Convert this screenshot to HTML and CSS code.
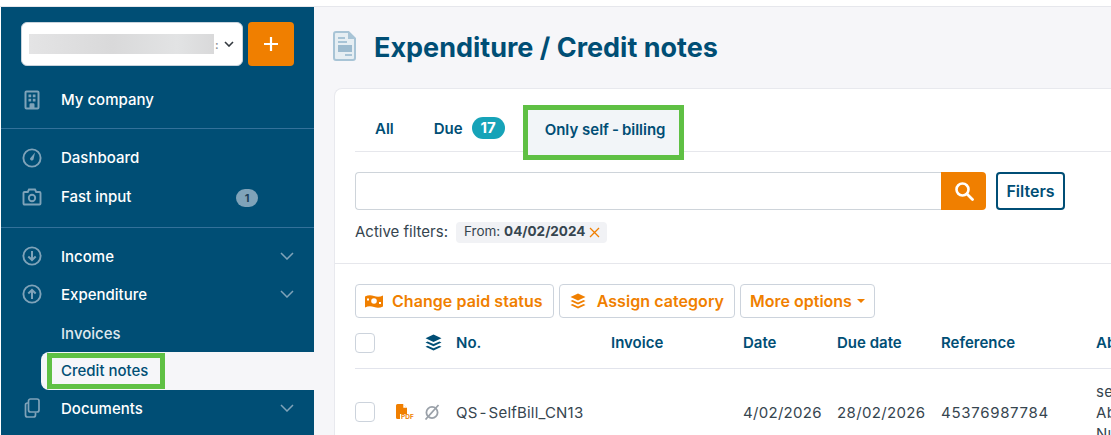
FILE: index.html
```html
<!DOCTYPE html>
<html lang="en">
<head>
	<meta charset="UTF-8">
	<title>Expenditure / Credit notes</title>
	<link rel="stylesheet" href="styles.css">
</head>
<body>
	<div class="topStrip"></div>
	<div class="app">
		<div class="sidebar">
			<div class="companyRow">
				<div class="companySelect">
					<span class="blurName"></span>
					<span class="nameEnd">:</span>
					<svg class="selectArrow" viewBox="0 0 10 6"><path d="M1 1l4 4 4-4" fill="none" stroke="#343a40" stroke-width="1.6"/></svg>
				</div>
				<div class="plusBtn">
					<svg viewBox="0 0 16 16"><path d="M8 1v14M1 8h14" stroke="#fff" stroke-width="2.2"/></svg>
				</div>
			</div>
			<div class="navGroup navFirst">
				<div class="navItem">
					<svg class="navIcon" viewBox="0 0 20 20"><path d="M4.500 1.500h11a1 1 0 0 1 1 1v15a1 1 0 0 1-1 1h-11a1 1 0 0 1-1-1v-15a1 1 0 0 1 1-1z" fill="none" stroke="#7fa3b9" stroke-width="2"/><path d="M6.500 4.500h2.700v2.700H6.500zM10.800 4.500h2.700v2.700h-2.700zM6.500 8.800h2.700v2.700H6.500zM10.800 8.800h2.700v2.700h-2.700zM7.500 18v-3.500a1.200 1.200 0 0 1 1.200-1.200h2.600a1.200 1.200 0 0 1 1.200 1.200V18z" fill="#7fa3b9"/></svg>
					<span>My company</span>
				</div>
			</div>
			<div class="navGroup">
				<div class="navItem">
					<svg class="navIcon" viewBox="0 0 20 20"><circle cx="10" cy="10" r="8.600" fill="none" stroke="#7fa3b9" stroke-width="1.900"/><path d="M13 4.600l-1.500 7a1.900 1.900 0 0 1-3.500-1.100z" fill="#7fa3b9"/></svg>
					<span>Dashboard</span>
				</div>
				<div class="navItem">
					<svg class="navIcon" viewBox="0 0 20 20"><path d="M2.500 5h3.300l1.200-2.500h6L14.200 5h3.300a1 1 0 0 1 1 1v10.500a1 1 0 0 1-1 1h-15a1 1 0 0 1-1-1V6a1 1 0 0 1 1-1z" fill="none" stroke="#7fa3b9" stroke-width="1.900"/><circle cx="10" cy="11" r="3.200" fill="none" stroke="#7fa3b9" stroke-width="1.900"/></svg>
					<span>Fast input</span>
					<span class="navCount">1</span>
				</div>
			</div>
			<div class="navGroup navLast">
				<div class="navItem">
					<svg class="navIcon" viewBox="0 0 20 20"><circle cx="10" cy="10" r="8.600" fill="none" stroke="#7fa3b9" stroke-width="1.900"/><path d="M10 5v9M6.300 10.500L10 14l3.700-3.500" fill="none" stroke="#7fa3b9" stroke-width="2"/></svg>
					<span>Income</span>
					<svg class="navArrow" viewBox="0 0 14 8"><path d="M1 1l6 6 6-6" fill="none" stroke="#7fa3b9" stroke-width="1.500"/></svg>
				</div>
				<div class="navItem">
					<svg class="navIcon" viewBox="0 0 20 20"><circle cx="10" cy="10" r="8.600" fill="none" stroke="#7fa3b9" stroke-width="1.900"/><path d="M10 15V6M6.300 9.500L10 6l3.700 3.500" fill="none" stroke="#7fa3b9" stroke-width="2"/></svg>
					<span>Expenditure</span>
					<svg class="navArrow" viewBox="0 0 14 8"><path d="M1 1l6 6 6-6" fill="none" stroke="#7fa3b9" stroke-width="1.500"/></svg>
				</div>
				<div class="navSub">Invoices</div>
				<div class="navCurrent"><span class="markBox">Credit notes</span></div>
				<div class="navItem">
					<svg class="navIcon" viewBox="0 0 20 20"><path d="M8.500 1h6.500a2 2 0 0 1 2 2v9a2 2 0 0 1-2 2H8.500a2 2 0 0 1-2-2V3a2 2 0 0 1 2-2z" fill="none" stroke="#7fa3b9" stroke-width="1.700"/><path d="M6 5h-.5a2 2 0 0 0-2 2v10a2 2 0 0 0 2 2h6a2 2 0 0 0 2-2v-2.500" fill="none" stroke="#7fa3b9" stroke-width="1.700"/></svg>
					<span>Documents</span>
					<svg class="navArrow" viewBox="0 0 14 8"><path d="M1 1l6 6 6-6" fill="none" stroke="#7fa3b9" stroke-width="1.500"/></svg>
				</div>
			</div>
		</div>
		<div class="main">
			<div class="pageTitle">
				<svg class="titleIcon" viewBox="0 0 23 30"><path d="M3 1h12.500L22 7.500V27a2 2 0 0 1-2 2H3a2 2 0 0 1-2-2V3a2 2 0 0 1 2-2z" fill="#e6eef3" stroke="#a8c4d6" stroke-width="2"/><path d="M15 1v7h7z" fill="#a8c4d6"/><path d="M5 6h7v2H5zM5 10h9v2H5zM12 23h7v2h-7z" fill="#a8c4d6"/><path d="M5 14h14v7H5z" fill="#9dbbcf"/></svg>
				<h1>Expenditure / Credit notes</h1>
			</div>
			<div class="card">
				<div class="cardTop">
					<div class="tabs">
						<div class="tab tabAll">All</div>
						<div class="tab tabDue">Due <span class="tabCount">17</span></div>
						<div class="tab tabActive"><span>Only self<i class="wideDash tabDash">-</i>billing</span></div>
					</div>
					<div class="searchRow">
						<div class="searchBox">
							<div class="searchInput"></div>
							<div class="searchBtn">
								<svg viewBox="0 0 20 20"><circle cx="8.500" cy="8.500" r="6" fill="none" stroke="#fff" stroke-width="2.600"/><path d="M13 13l5.500 5.500" stroke="#fff" stroke-width="2.800" stroke-linecap="round"/></svg>
							</div>
						</div>
						<div class="filtersBtn">Filters</div>
					</div>
					<div class="activeFilters">
						<span class="filtersLabel">Active filters:</span>
						<span class="chip"><span>From: <b>04/02/2024</b></span>
							<svg viewBox="0 0 11 11"><path d="M1 1l9 9M10 1l-9 9" stroke="#f07f00" stroke-width="1.300"/></svg>
						</span>
					</div>
				</div>
				<div class="cardBody">
					<div class="actions">
						<div class="actionBtn spaced">
							<svg class="moneyIcon" viewBox="0 0 18 14"><path d="M0 2.500c3-1.500 6-1.500 9-.5s6 1 9-.5v11c-3 1.500-6 1.500-9 .5s-6-1-9 .5z" fill="#f07f00"/><circle cx="9" cy="7" r="2.800" fill="#fff"/><path d="M2 4.500h2v2H2zM14 8h2v2h-2z" fill="#fff"/></svg>
							Change paid status
						</div>
						<div class="actionBtn spaced">
							<svg class="stackIcon" viewBox="0 0 16 16"><path d="M8 .5l7.500 3.500L8 7.500.5 4z" fill="#f07f00"/><path d="M2.500 7L.5 8 8 11.500 15.500 8l-2-1L8 9.500zM2.500 11L.5 12 8 15.500 15.500 12l-2-1L8 13.500z" fill="#f07f00"/></svg>
							Assign category
						</div>
						<div class="actionBtn moreBtn">More options<i class="caret"></i></div>
					</div>
					<div class="tableRow tableHead">
						<div><span class="check"></span></div>
						<div class="iconCell">
							<svg class="stackIcon" viewBox="0 0 16 16"><path d="M8 .5l7.500 3.500L8 7.500.5 4z" fill="#004e75"/><path d="M2.500 7L.5 8 8 11.500 15.500 8l-2-1L8 9.500zM2.500 11L.5 12 8 15.500 15.500 12l-2-1L8 13.500z" fill="#004e75"/></svg>
						</div>
						<div>No.</div>
						<div>Invoice</div>
						<div>Date</div>
						<div>Due date</div>
						<div>Reference</div>
						<div>About</div>
					</div>
					<div class="tableRow tableLine">
						<div><span class="check"></span></div>
						<div class="rowIcons">
							<span class="pdfIcon"><svg viewBox="0 0 12 15"><path d="M1.500 0h5.500l4 4v11H1.500a1.500 1.500 0 0 1-1.500-1.500v-12A1.500 1.500 0 0 1 1.500 0z" fill="#f07f00"/><path d="M7.300 0v3.700H11z" fill="#fff"/></svg><em>PDF</em></span>
							<svg class="noneIcon" viewBox="0 0 16 16"><circle cx="8" cy="8.500" r="5.600" fill="none" stroke="#9aa1a9" stroke-width="1.800"/><path d="M1.500 15.500L14.500 1" stroke="#9aa1a9" stroke-width="1.800"/></svg>
						</div>
						<div class="noCell">QS<i class="wideDash">-</i>SelfBill_CN13</div>
						<div></div>
						<div>4/02/2026</div>
						<div class="dueCell">28/02/2026</div>
						<div class="refCell">45376987784</div>
						<div class="aboutCell">self-billing<br>About<br>Number</div>
					</div>
				</div>
			</div>
		</div>
	</div>
</body>
</html>
```

FILE: styles.css
```css
*{
	margin: 0;
	padding: 0;
	box-sizing: border-box;
}
html, body{
	height: 435px;
	overflow: hidden;
	background-color: #fff;
}
body{
	font-family: "Inter", "Liberation Sans", sans-serif;
	font-size: 15px;
	line-height: 21px;
	color: #36454f;
}
.topStrip{
	height: 7px;
	border-bottom: 1px solid #e6e7ec;
}
.app{
	display: flex;
	height: 428px;
	padding-left: 1px;
}
.wideDash{
	margin: 0 2px;
	font-style: normal;
}
.tabDash{
	margin: 0 3px;
}

/* sidebar */
.sidebar{
	width: 313px;
	flex: none;
	background-color: #004e75;
	color: #fff;
	font-weight: 500;
}
.companyRow{
	display: flex;
	gap: 5px;
	padding: 15px 20px 0;
}
.companySelect{
	display: flex;
	align-items: center;
	width: 222px;
	height: 44px;
	padding: 0 7px;
	background-color: #fff;
	border: 1px solid #c9d3dc;
	border-radius: 6px;
	color: #8a8f95;
	font-size: 12px;
}
.blurName{
	width: 185px;
	height: 20px;
	background: linear-gradient(90deg, #e4e4e5, #d9d9da 45%, #e2e3e4 80%, #d9d9da);
}
.nameEnd{
	margin-left: 1px;
	width: 7px;
}
.selectArrow{
	width: 10px;
	height: 6px;
	margin-left: 2px;
}
.plusBtn{
	display: flex;
	align-items: center;
	justify-content: center;
	width: 46px;
	height: 44px;
	background-color: #f07f00;
	border-radius: 4px;
}
.plusBtn svg{
	width: 16px;
	height: 16px;
}
.navGroup{
	padding: 10px 0;
	border-bottom: 1px solid #33719a;
}
.navFirst{
	height: 63px;
	padding: 15px 0 0;
}
.navLast{
	border-bottom: none;
}
.navItem{
	display: flex;
	align-items: center;
	height: 39px;
	padding: 0 20px 2px 21px;
}
.navLast .navItem{
	height: 38px;
}
.navIcon{
	width: 20px;
	height: 20px;
	margin-right: 19px;
	flex: none;
}
.navCount{
	margin: 2px 36px 0 auto;
	width: 22px;
	height: 18px;
	border-radius: 9px;
	background-color: #7fa3b9;
	color: #1c3f57;
	font-size: 11px;
	font-weight: 700;
	line-height: 18px;
	text-align: center;
}
.navArrow{
	width: 14px;
	height: 8px;
	margin-left: auto;
}
.navSub{
	height: 38px;
	padding-left: 60px;
	line-height: 40px;
	color: #dfe8ee;
}
.navCurrent{
	display: flex;
	height: 38px;
	margin-left: 40px;
	background-color: #f6f6f9;
	border-radius: 8px 0 0 8px;
	padding: 1px 0 0 6px;
	color: #004e75;
}
.markBox{
	width: 118px;
	height: 36px;
	border: 5px solid #5fc044;
	padding-left: 9px;
	line-height: 26px;
}

/* main */
.main{
	flex: 1;
	min-width: 0;
	background-color: #f6f6f9;
	padding: 0 0 0 20px;
	overflow: hidden;
}
.pageTitle{
	display: flex;
	align-items: center;
	height: 81px;
	gap: 18px;
}
.titleIcon{
	width: 23px;
	height: 30px;
	margin: 0 0 4px -1px;
	flex: none;
}
.pageTitle h1{
	font-size: 27px;
	line-height: 32px;
	font-weight: 700;
	color: #004e75;
}
.card{
	width: 800px;
	height: 360px;
	background-color: #fff;
	border: 1px solid #e8e9ee;
	border-right: none;
	border-radius: 8px 0 0 0;
}
.cardTop{
	padding: 16px 0 0 20px;
	height: 175px;
	border-bottom: 1px solid #e6e7ec;
}

/* tabs */
.tabs{
	display: flex;
	height: 47px;
	border-bottom: 1px solid #e6e7ec;
	color: #004e75;
	font-weight: 600;
}
.tab{
	display: flex;
	align-items: center;
	height: 46px;
}
.tabAll{
	padding: 0 20px;
}
.tabDue{
	padding: 0 18px 0 20px;
	gap: 9px;
}
.tabCount{
	width: 33px;
	height: 22px;
	border-radius: 11px;
	background-color: #16a3b8;
	color: #fff;
	font-weight: 700;
	line-height: 22px;
	text-align: center;
}
.tabActive{
	width: 161px;
	height: 55px;
	padding: 0 0 7px 17px;
	background-color: #f2f5f8;
	border: 5px solid #5fc044;
	white-space: nowrap;
}

/* search */
.searchRow{
	display: flex;
	gap: 10px;
	margin-top: 20px;
}
.searchBox{
	display: flex;
	width: 631px;
	height: 38px;
}
.searchInput{
	flex: 1;
	border: 1px solid #ced4da;
	border-right: none;
	border-radius: 4px 0 0 4px;
}
.searchBtn{
	display: flex;
	align-items: center;
	justify-content: center;
	width: 45px;
	background-color: #f07f00;
	border-radius: 0 4px 4px 0;
}
.searchBtn svg{
	width: 20px;
	height: 20px;
}
.filtersBtn{
	width: 69px;
	height: 38px;
	border: 2px solid #004e75;
	border-radius: 4px;
	color: #004e75;
	font-size: 16px;
	font-weight: 600;
	line-height: 34px;
	text-align: center;
}
.activeFilters{
	display: flex;
	align-items: center;
	gap: 8px;
	height: 21px;
	margin-top: 12px;
}
.filtersLabel{
	margin-top: -2px;
}
.chip{
	display: flex;
	align-items: center;
	justify-content: space-between;
	width: 151px;
	height: 21px;
	padding: 0 7px 0 8px;
	background-color: #f1f2f5;
	border-radius: 4px;
	font-size: 13.500px;
	white-space: nowrap;
}
.chip span{
	margin-top: -2px;
}
.chip b{
	font-weight: 700;
}
.chip svg{
	width: 11px;
	height: 11px;
	margin-top: -1px;
}

/* actions and table */
.cardBody{
	padding: 20px 0 0 20px;
}
.actions{
	display: flex;
	gap: 5px;
}
.actionBtn{
	display: flex;
	align-items: center;
	height: 34px;
	padding: 0 10px;
	border: 1px solid #ccd3dc;
	border-radius: 4px;
	color: #f07f00;
	font-size: 16px;
	font-weight: 600;
}
.spaced{
	letter-spacing: .06px;
}
.moreBtn{
	padding: 0 9px;
}
.moneyIcon{
	width: 18px;
	height: 14px;
	margin: 0 9px 0 -1px;
}
.stackIcon{
	width: 16px;
	height: 16px;
	margin-right: 11px;
}
.caret{
	margin-left: 5px;
	border-top: 4px solid #f07f00;
	border-left: 4px solid transparent;
	border-right: 4px solid transparent;
}
.tableRow{
	display: grid;
	grid-template-columns: 40px 61px 155px 132px 94px 104px 155px 60px;
	align-items: center;
	width: 801px;
}
.tableHead{
	height: 51px;
	padding-bottom: 1px;
	border-bottom: 1px solid #e2e4ec;
	color: #004e75;
	font-weight: 600;
}
.tableLine{
	height: 86px;
	letter-spacing: .3px;
}
.check{
	display: block;
	width: 20px;
	height: 20px;
	border: 1px solid #ccd3dc;
	border-radius: 4px;
}
.iconCell{
	padding-left: 30px;
	line-height: 0;
}
.iconCell .stackIcon{
	width: 17px;
	height: 17px;
	margin: 0;
}
.rowIcons{
	display: flex;
	align-items: center;
	gap: 13px;
	padding-left: 1px;
}
.pdfIcon{
	display: block;
	width: 15px;
	height: 16px;
	position: relative;
}
.pdfIcon svg{
	display: block;
	width: 12px;
	height: 15px;
}
.pdfIcon em{
	position: absolute;
	top: 10px;
	left: 4px;
	padding: 0 0 0 1px;
	background-color: #fff;
	color: #f07f00;
	font-size: 6.500px;
	line-height: 6px;
	letter-spacing: 0;
	font-style: normal;
	font-weight: 700;
}
.noneIcon{
	width: 16px;
	height: 16px;
}
.noCell{
	letter-spacing: .2px;
}
.dueCell{
	letter-spacing: .35px;
}
.refCell{
	letter-spacing: .7px;
}
.aboutCell{
	white-space: nowrap;
	overflow: hidden;
}
```
